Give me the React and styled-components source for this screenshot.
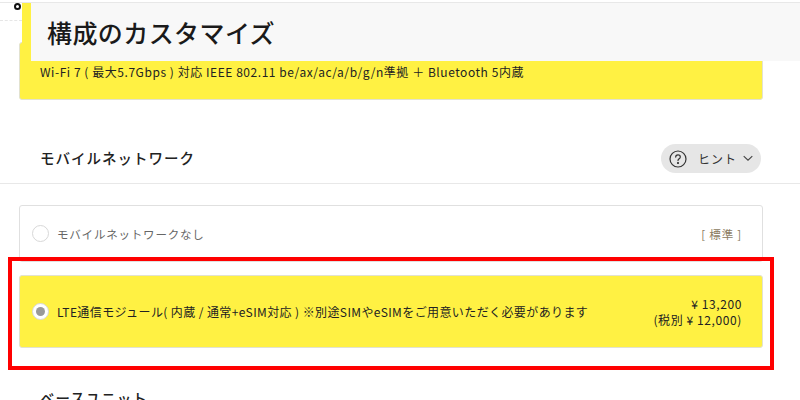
import React from 'react'
import styled, { createGlobalStyle } from 'styled-components'

const GlobalStyle = createGlobalStyle`
  html, body {
    margin: 0;
    padding: 0;
    height: 400px;
    overflow: hidden;
    background: #fff;
    font-family: "Noto Sans CJK JP", "Noto Sans", sans-serif;
    color: #222;
  }
`

const Page = styled.div`
  position: relative;
  width: 800px;
  height: 400px;
  overflow: hidden;
  padding-top: 42px;
  box-sizing: border-box;
`

const TopLine = styled.div`
  position: absolute;
  top: 2px;
  left: 0;
  right: 0;
  height: 1px;
  background: #e8e8e8;
`

const DashLine = styled.div`
  position: absolute;
  top: 20px;
  left: 0;
  width: 22px;
  border-top: 1px dashed #e6e6e6;
`

const Ring = styled.div`
  position: absolute;
  top: 3px;
  left: 14px;
  width: 3px;
  height: 3px;
  border: 2px solid #111;
  border-radius: 50%;
`

const StickyHeader = styled.div`
  position: absolute;
  top: 3px;
  left: 22px;
  right: 0;
  height: 58px;
  box-sizing: border-box;
  background: #f8f8f8;
  border-left: 9px solid #fff143;
  padding-left: 16px;
  display: flex;
  align-items: center;
`

const HeaderTitle = styled.h1`
  margin: 0;
  font-size: 25px;
  font-weight: 500;
  line-height: 1;
  color: #1a1a1a;
  letter-spacing: 0.42px;
`

const Card = styled.div`
  margin: 0 37px 0 19px;
  height: ${p => p.$h}px;
  box-sizing: border-box;
  border: 1px solid ${p => (p.$active ? '#e2e2d0' : '#e0e0e0')};
  border-radius: 3px;
  background: ${p => (p.$active ? '#fff143' : '#fff')};
  display: flex;
  align-items: ${p => p.$align || 'center'};
  justify-content: space-between;
  padding: ${p => p.$pad || '0 20px 0 12px'};
`

const SpecText = styled.p`
  margin: 0;
  font-size: 12px;
  line-height: 17px;
  letter-spacing: 0.55px;
  color: #222;
`

const SectionHead = styled.div`
  height: 84px;
  box-sizing: border-box;
  border-bottom: 1px solid #e8e8e8;
  padding: 0 39px 10px 40px;
  display: flex;
  align-items: flex-end;
  justify-content: space-between;
`

const SectionTitle = styled.h2`
  margin: 0 0 5px;
  font-size: 14.5px;
  font-weight: 500;
  line-height: 20px;
  letter-spacing: 1px;
  color: #222;
`

const HintButton = styled.button`
  width: 100px;
  height: 29px;
  border: 0;
  border-radius: 15px;
  background: #e6e6e6;
  padding: 0 8px 0 8px;
  display: flex;
  align-items: center;
  font: inherit;
  font-size: 12px;
  letter-spacing: 1px;
  color: #333;
`

const HintLabel = styled.span`
  margin: 0 auto 0 11px;
`

const OptionLabel = styled.div`
  display: flex;
  align-items: center;
  gap: 8px;
`

const Radio = styled.span`
  width: 17px;
  height: 17px;
  box-sizing: border-box;
  border-radius: 50%;
  border: 1px solid #d8d8d8;
  background: #fff;
  display: flex;
  align-items: center;
  justify-content: center;
  &::after {
    content: '';
    width: 9px;
    height: 9px;
    border-radius: 50%;
    background: ${p => (p.$checked ? '#999' : 'transparent')};
  }
`

const OptionText = styled.span`
  font-size: ${p => (p.$muted ? '11.5px' : '12px')};
  letter-spacing: ${p => (p.$muted ? '0.8px' : '0.4px')};
  color: ${p => (p.$muted ? '#666' : '#222')};
`

const Standard = styled.span`
  font-size: 11.5px;
  letter-spacing: 0.8px;
  color: #8a7a60;
`

const Price = styled.div`
  text-align: right;
  font-size: 12px;
  line-height: 16px;
  letter-spacing: 0.6px;
  color: #222;
`

const Highlight = styled.div`
  position: absolute;
  top: 257px;
  left: 8px;
  width: 766px;
  height: 113px;
  box-sizing: border-box;
  border: 4px solid #f00;
  pointer-events: none;
`

const OptionList = styled.div`
  padding-top: 21px;
  display: flex;
  flex-direction: column;
  gap: 13px;
`

const NextTitle = styled(SectionTitle)`
  margin: 40px 0 0 40px;
`

function HintIcon() {
  return (
    <svg width="18" height="18" viewBox="0 0 18 18" fill="none" stroke="#333" strokeWidth="1.2">
      <circle cx="9" cy="9" r="8" />
      <path d="M6.7 7.1c0-1.4 1-2.2 2.3-2.2s2.3.8 2.3 2c0 1.9-2.3 1.8-2.3 3.7" strokeLinecap="round" />
      <circle cx="9" cy="13" r=".5" fill="#333" />
    </svg>
  )
}

function Chevron() {
  return (
    <svg width="10" height="7" viewBox="0 0 10 7" fill="none" stroke="#444" strokeWidth="1.1">
      <path d="M.7 1.2l4.3 4 4.3-4" />
    </svg>
  )
}

export default function App() {
  return (
    <Page>
      <GlobalStyle />
      <TopLine />
      <DashLine />
      <Ring />

      <Card $active $h={58} $align="flex-start" $pad="20px 12px 0 20px">
        <SpecText>Wi-Fi 7 ( 最大5.7Gbps ) 対応 IEEE 802.11 be/ax/ac/a/b/g/n準拠 ＋ Bluetooth 5内蔵</SpecText>
      </Card>

      <SectionHead>
        <SectionTitle>モバイルネットワーク</SectionTitle>
        <HintButton>
          <HintIcon />
          <HintLabel>ヒント</HintLabel>
          <Chevron />
        </HintButton>
      </SectionHead>

      <OptionList>
        <Card $h={57}>
          <OptionLabel>
            <Radio />
            <OptionText $muted>モバイルネットワークなし</OptionText>
          </OptionLabel>
          <Standard>[ 標準 ]</Standard>
        </Card>
        <Card $active $h={73}>
          <OptionLabel>
            <Radio $checked />
            <OptionText>LTE通信モジュール( 内蔵 / 通常+eSIM対応 ) ※別途SIMやeSIMをご用意いただく必要があります</OptionText>
          </OptionLabel>
          <Price>
            <div>¥ 13,200</div>
            <div>(税別 ¥ 12,000)</div>
          </Price>
        </Card>
      </OptionList>

      <NextTitle>ベースユニット</NextTitle>

      <Highlight />
      <StickyHeader>
        <HeaderTitle>構成のカスタマイズ</HeaderTitle>
      </StickyHeader>
    </Page>
  )
}
